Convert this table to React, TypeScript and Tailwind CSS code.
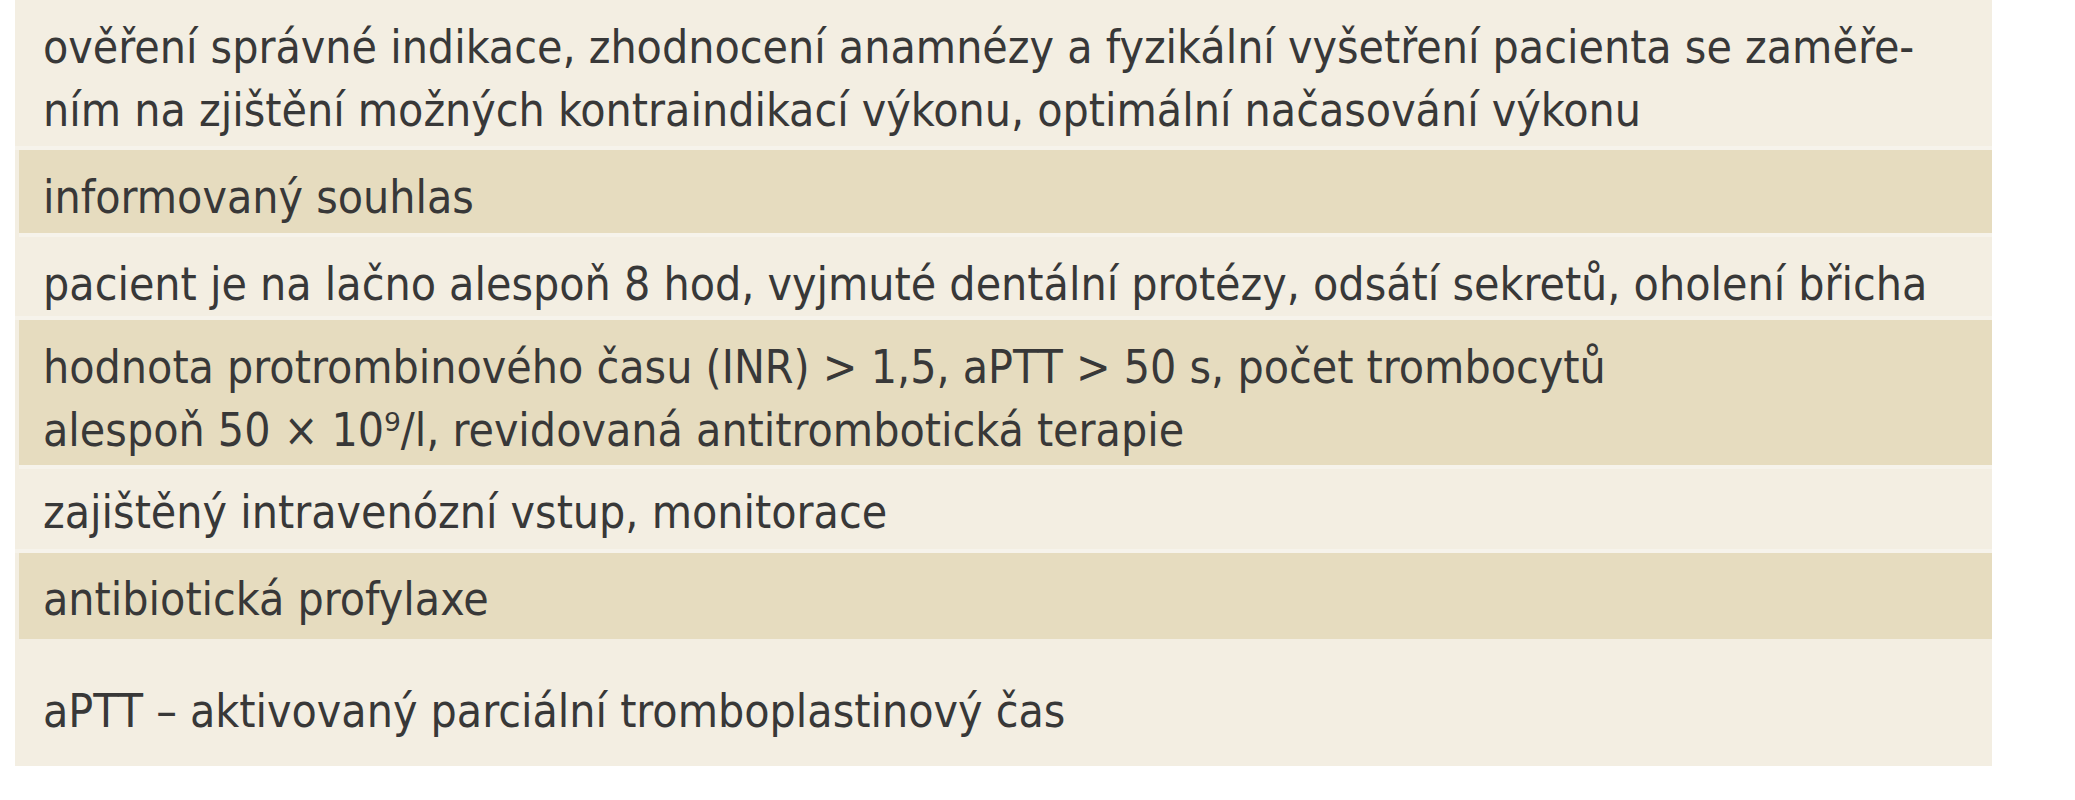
type Row = { lines: string[]; dark?: boolean; cls: string };

const rows: Row[] = [
  {
    lines: [
      'ověření správné indikace, zhodnocení anamnézy a fyzikální vyšetření pacienta se zaměře-',
      'ním na zjištění možných kontraindikací výkonu, optimální načasování výkonu',
    ],
    cls: 'h-[150px] pt-[16px] border-b-4',
  },
  { lines: ['informovaný souhlas'], dark: true, cls: 'h-[87px] pt-[16px] border-b-4' },
  {
    lines: [
      'pacient je na lačno alespoň 8 hod, vyjmuté dentální protézy, odsátí sekretů, oholení břicha',
    ],
    cls: 'h-[83px] pt-[16px] border-b-4',
  },
  {
    lines: [
      'hodnota protrombinového času (INR) > 1,5, aPTT > 50 s, počet trombocytů',
      'alespoň 50 × 10⁹/l, revidovaná antitrombotická terapie',
    ],
    dark: true,
    cls: 'h-[149px] pt-[16px] border-b-4',
  },
  { lines: ['zajištěný intravenózní vstup, monitorace'], cls: 'h-[84px] pt-[12px] border-b-4' },
  { lines: ['antibiotická profylaxe'], dark: true, cls: 'h-[86px] pt-[15px]' },
];

export default function App() {
  return (
    <div className="min-h-[800px] w-[2075px] bg-white">
      <div
        className="ml-[15px] flex w-[1977px] flex-col bg-[#f3eee2] text-[46px] leading-[63px] text-[#383838]"
        style={{ fontFamily: '"DejaVu Sans Condensed", "DejaVu Sans", sans-serif' }}
      >
        {rows.map((r, i) => (
          <div
            key={i}
            className={
              'box-border border-[#f6f3eb] ' +
              r.cls +
              (r.dark ? ' ml-[4px] bg-[#e6dcbf] pl-[24px]' : ' pl-[28px]')
            }
          >
            {r.lines.map((l, j) => (
              <div key={j} className="whitespace-nowrap">
                {l}
              </div>
            ))}
          </div>
        ))}
        <div className="h-[127px] whitespace-nowrap pl-[28px] pt-[41px]">
          aPTT – aktivovaný parciální tromboplastinový čas
        </div>
      </div>
    </div>
  );
}
